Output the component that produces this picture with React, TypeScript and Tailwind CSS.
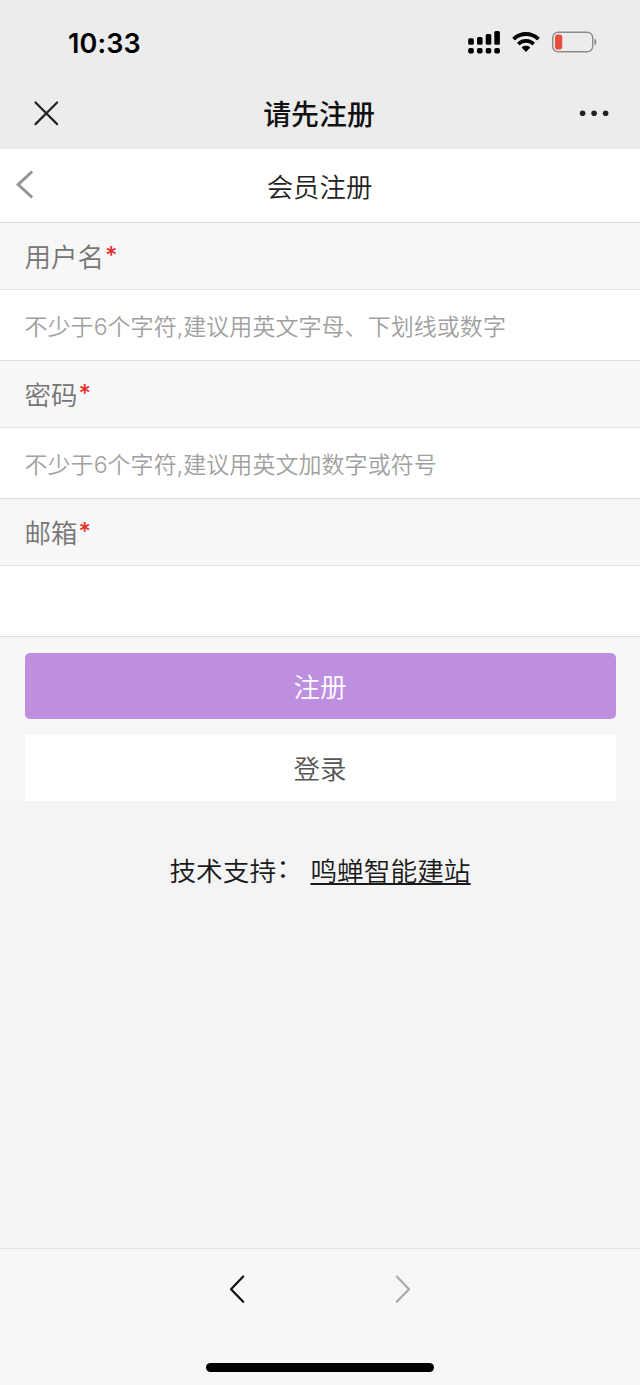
import React from "react";

const fields = [
  { label: "用户名", type: "text", placeholder: "不少于6个字符,建议用英文字母、下划线或数字" },
  { label: "密码", type: "password", placeholder: "不少于6个字符,建议用英文加数字或符号" },
  { label: "邮箱", type: "email", placeholder: "" },
];

function StatusBar() {
  return (
    <div className="flex h-[84px] items-center justify-between pr-[43px] pl-[68px]">
      <span className="mt-[2px] font-['Inter','Liberation_Sans',sans-serif] text-[27px] leading-none font-semibold tracking-[0.1px] text-black">
        10:33
      </span>
      <div className="flex items-center">
        <svg width="33" height="24" viewBox="0 0 33 24">
          <rect x="0.2" y="8.2" width="5.6" height="6.6" rx="1.6" />
          <rect x="9" y="7" width="5.6" height="7.8" rx="1.6" />
          <rect x="17.7" y="4" width="5.6" height="10.8" rx="1.6" />
          <rect x="26.3" y="1" width="5.6" height="13.8" rx="1.6" />
          <rect x="0.2" y="18" width="5.6" height="5.6" rx="1.8" />
          <rect x="9" y="18" width="5.6" height="5.6" rx="1.8" />
          <rect x="17.7" y="18" width="5.6" height="5.6" rx="1.8" />
          <rect x="26.3" y="18" width="5.6" height="5.6" rx="1.8" />
        </svg>
        <svg className="ml-[11px]" width="28" height="22" viewBox="0 0 28 22">
          <path d="M14 1C8.900 1 4.200 3 .7 6.300c-.3.300-.3.700 0 1l1.700 1.700c.3.300.7.300 1 0C6.200 6.400 9.900 4.900 14 4.900s7.800 1.500 10.600 4.100c.3.300.7.300 1 0l1.700-1.700c.3-.3.300-.7 0-1C23.800 3 19.100 1 14 1Z" />
          <path d="M14 7.900c-3.300 0-6.200 1.200-8.500 3.300-.3.300-.3.700 0 1l1.700 1.700c.3.300.7.300 1 0 1.600-1.400 3.600-2.200 5.800-2.200s4.200.8 5.800 2.200c.3.300.7.300 1 0l1.700-1.700c.3-.3.300-.7 0-1-2.300-2.100-5.200-3.300-8.500-3.300Z" />
          <path d="M14 14.700c-1.500 0-2.800.5-3.900 1.400-.3.300-.3.700 0 1l3.400 3.300c.3.300.7.300 1 0l3.400-3.300c.3-.3.300-.7 0-1-1.100-.9-2.400-1.400-3.900-1.400Z" />
        </svg>
        <svg className="ml-[11px]" width="46" height="22" viewBox="0 0 46 22">
          <rect x="1.700" y="1.200" width="40" height="19.600" rx="5.500" fill="none" stroke="#8b8b8b" strokeWidth="1.400" />
          <rect x="4" y="3.400" width="7.200" height="15.200" rx="2.800" fill="#eb4d3d" />
          <path d="M43.400 7.800v6.400c1.300-.5 2.100-1.700 2.100-3.200s-.8-2.700-2.100-3.200Z" fill="#8b8b8b" />
        </svg>
      </div>
    </div>
  );
}

function TitleBar() {
  return (
    <div className="grid h-[65px] grid-cols-[1fr_auto_1fr] items-start">
      <svg className="mt-[16px] ml-[33px]" width="26" height="26" viewBox="0 0 26 26" fill="none" stroke="#222" strokeWidth="2.200" strokeLinecap="round">
        <path d="M2.500 2.500l21.600 21.600M24.100 2.500L2.500 24.100" />
      </svg>
      <h1 className="mt-[9px] -ml-[2px] text-[27.900px] leading-[40px] font-medium text-[#111]">请先注册</h1>
      <svg className="mt-[25px] mr-[30px] justify-self-end" width="32" height="8" viewBox="0 0 32 8" fill="#222">
        <circle cx="4.600" cy="4.200" r="2.800" />
        <circle cx="16.100" cy="4.200" r="2.800" />
        <circle cx="27.600" cy="4.200" r="2.800" />
      </svg>
    </div>
  );
}

export default function App() {
  return (
    <div className="flex h-[1385px] w-[640px] flex-col bg-[#f4f4f4] font-['Noto_Sans_CJK_SC',sans-serif] font-[350]">
      <header className="bg-[#ececec]">
        <StatusBar />
        <TitleBar />
      </header>

      <main className="flex-1">
        <div className="bg-[#f7f7f7]">
          <div className="grid h-[74px] grid-cols-[1fr_auto_1fr] items-start border-b border-[#dadada] bg-white">
            <svg className="mt-[20px] ml-[14px]" width="22" height="31" viewBox="0 0 22 31" fill="none" stroke="#949494" strokeWidth="3">
              <path d="M18.200 2.500L4.200 15.500l14 13" />
            </svg>
            <h2 className="mt-[17px] -ml-px text-[26.400px] leading-[40px] font-[350] text-[#222]">会员注册</h2>
          </div>

          <form>
            {fields.map((field) => (
              <div key={field.type}>
                <label className="flex h-[67px] items-center border-b border-[#e3e3e3] pl-[24.500px] text-[26.500px] text-[#757575]">
                  {field.label}
                  <span className="-mt-px ml-[1px] font-['Inter',sans-serif] text-[24px] font-medium text-[#e3302c]">*</span>
                </label>
                <input
                  type={field.type}
                  placeholder={field.placeholder}
                  className="block h-[71px] w-full border-b border-[#dedede] bg-white pt-[4px] pl-[24.500px] font-['Inter','Noto_Sans_CJK_SC',sans-serif] text-[23px] font-[350] tracking-[0.05px] outline-none placeholder:text-[#a0a0a0] placeholder:opacity-100"
                />
              </div>
            ))}
            <div className="flex flex-col gap-4 px-[24.500px] pt-4">
              <button type="button" className="h-[66px] rounded-[5px] bg-[#be8edf] text-[26.500px] font-[350] text-white">
                注册
              </button>
              <button type="button" className="h-[66px] bg-white text-[26.500px] font-[350] text-[#555]">
                登录
              </button>
            </div>
          </form>
        </div>

        <p className="mt-[49px] flex justify-center text-[26.700px] leading-[40px] text-[#1a1a1a]">
          <span className="flex w-[141px]">
            技术支持<span className="-mt-[3px]">：</span>
          </span>
          <a className="underline decoration-2 underline-offset-[2px]">鸣蝉智能建站</a>
        </p>
      </main>

      <footer className="flex h-[137px] flex-col items-center border-t border-[#e4e4e4] bg-[#f7f7f7]">
        <div className="mt-[25px] flex gap-[146px]">
          <svg width="20" height="30" viewBox="0 0 20 30" fill="none" stroke="#111" strokeWidth="2.200" strokeLinecap="round" strokeLinejoin="round">
            <path d="M16.200 2.500L4 15.200l12.200 12.600" />
          </svg>
          <svg width="20" height="30" viewBox="0 0 20 30" fill="none" stroke="#aaa" strokeWidth="2.200" strokeLinecap="round" strokeLinejoin="round">
            <path d="M3.800 2.500L16 15.200 3.800 27.800" />
          </svg>
        </div>
        <div className="mt-[59px] h-[9px] w-[228px] rounded-full bg-black" />
      </footer>
    </div>
  );
}
